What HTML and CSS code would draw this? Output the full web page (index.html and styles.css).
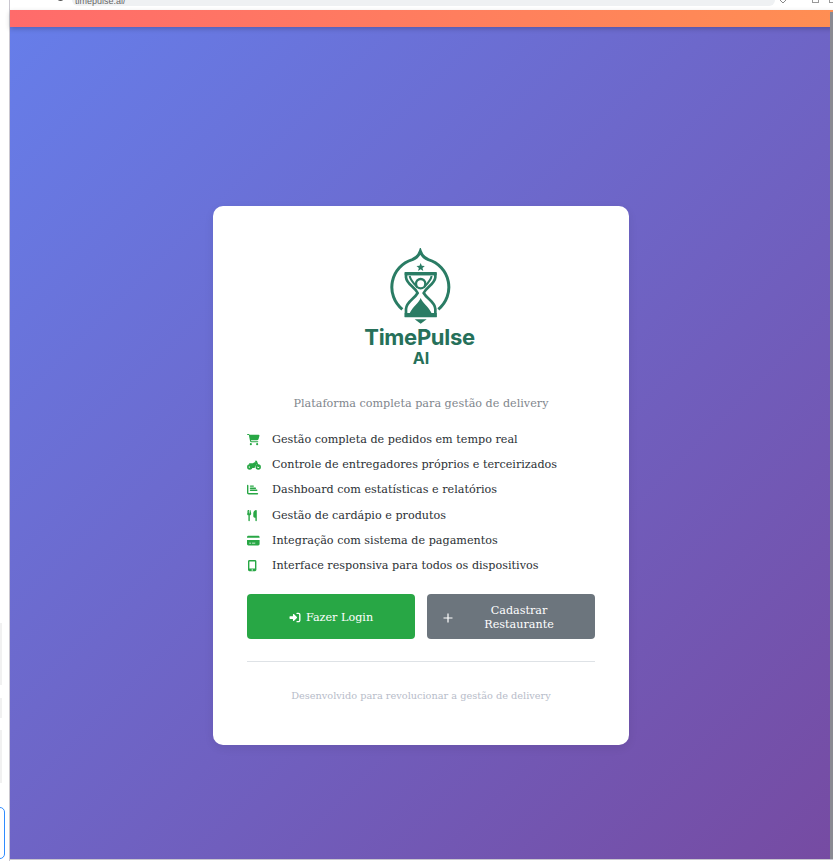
FILE: index.html
```html
<!DOCTYPE html>
<html lang="pt-BR">
<head>
<meta charset="utf-8">
<title>TimePulse AI</title>
<link rel="stylesheet" href="styles.css">
</head>
<body>
<div class="chrome">
  <div class="chrome-edge"></div>
  <div class="nav-icons">
    <svg class="nav-icon" viewBox="0 0 10 10"><path d="M8 2H2M4 0 2 2l2 2" /></svg>
    <svg class="nav-icon" viewBox="0 0 10 10"><path d="M2 2h6M6 0l2 2-2 2" /></svg>
    <svg class="nav-icon" viewBox="0 0 10 10"><path d="M1.500 0a4 4 0 1 0 7 0" /></svg>
  </div>
  <div class="address"><span class="address-text">timepulse.ai/</span></div>
  <div class="win-icons">
    <svg class="win-a" viewBox="0 0 8 6"><path d="M1 1l3 3 3-3"/></svg>
    <span class="win-b"></span>
    <span class="win-b"></span>
  </div>
</div>
<div class="window">
  <aside class="side">
    <div class="side-panel side-p1"></div>
    <div class="side-panel side-p2"></div>
    <div class="side-panel side-p3"></div>
    <div class="side-focus"></div>
  </aside>
  <div class="viewport">
    <div class="topbar"></div>
    <div class="scrollbar"></div>
    <main class="hero">
      <section class="card">
        <div class="logo">
          <svg class="logo-mark" viewBox="0 0 216 240" aria-hidden="true">
            <path class="ring" d="M52 184A86 86 0 0 1 82 35C94 30 102 22 106 10c4 12 12 20 24 25a86 86 0 0 1 30 149"/>
            <path class="fill" d="m107 45 3.500 8.500 9 .6-7 5.700 2.300 9-7.800-5-7.800 5 2.300-9-7-5.700 9-.6z"/>
            <path class="frame" d="M63 78h88v10c-2 20-25 28-35 47 10 18 34 25 35 48v20H63v-20c1-23 25-30 35-48-10-19-33-27-35-47z"/>
            <path class="inner" d="M74 84c3 14 14 24 24 35M140 84c-3 14-14 24-24 35"/>
            <path class="fill" d="M59 72h96v10H59zM59 195h96v13H59z"/>
            <circle class="disc" cx="107" cy="107" r="14"/>
            <path class="fill" d="M107 150c5 15 24 26 33 46H74c9-20 28-31 33-46z"/>
            <path class="fill" d="M89 214h36l-18 13z"/>
          </svg>
          <div class="logo-name">TimePulse</div>
          <div class="logo-sub">AI</div>
        </div>
        <p class="tagline">Plataforma completa para gestão de delivery</p>
        <ul class="features">
          <li class="feature">
            <svg class="f-icon" viewBox="0 0 576 512" preserveAspectRatio="xMinYMid meet"><path d="M0 24C0 11 11 0 24 0h45c22 0 42 13 51 32h411c26 0 46 25 39 50l-41 152c-8 28-33 47-62 47H180l5 29c2 11 12 20 24 20h287c13 0 24 11 24 24s-11 24-24 24H209c-35 0-64-25-71-59L87 55c-1-4-4-7-8-7H24C11 48 0 37 0 24zm128 440a48 48 0 1 1 96 0 48 48 0 1 1-96 0zm336-48a48 48 0 1 1 0 96 48 48 0 1 1 0-96z"/></svg>
            <span>Gestão completa de pedidos em tempo real</span>
          </li>
          <li class="feature">
            <svg class="f-icon" viewBox="0 0 640 512" preserveAspectRatio="xMinYMid meet">
              <circle class="bike-line" cx="125" cy="365" r="85"/>
              <circle class="bike-line" cx="515" cy="365" r="85"/>
              <path d="M95 190h175l70-45h50l-30-60h90l110 280h-70l-50-120-100 170H125z"/>
            </svg>
            <span>Controle de entregadores próprios e terceirizados</span>
          </li>
          <li class="feature">
            <svg class="f-icon" viewBox="0 0 512 512" preserveAspectRatio="xMinYMid meet"><path d="M64 64c0-18-14-32-32-32S0 46 0 64v336c0 44 36 80 80 80h400c18 0 32-14 32-32s-14-32-32-32H80c-9 0-16-7-16-16V64zm96 64h128c18 0 32-14 32-32s-14-32-32-32H160c-18 0-32 14-32 32s14 32 32 32zm0 96h224c18 0 32-14 32-32s-14-32-32-32H160c-18 0-32 14-32 32s14 32 32 32zm0 96h288c18 0 32-14 32-32s-14-32-32-32H160c-18 0-32 14-32 32s14 32 32 32z"/></svg>
            <span>Dashboard com estatísticas e relatórios</span>
          </li>
          <li class="feature">
            <svg class="f-icon" viewBox="0 0 448 512" preserveAspectRatio="xMinYMid meet"><path d="M416 0c-16 0-128 32-128 176v112c0 35 29 64 64 64h32v128c0 18 14 32 32 32s32-14 32-32V32c0-18-14-32-32-32zM64 16C64 8 58 1 50 0S35 4 33 12L2 152c-1 5-2 10-2 15 0 37 28 67 64 72v241c0 18 14 32 32 32s32-14 32-32V239c36-5 64-35 64-72 0-5-1-10-2-15L159 12c-2-8-9-13-17-12s-14 8-14 16v134c0 5-4 10-10 10-5 0-10-4-11-10L93 15c-1-8-8-15-17-15s-15 7-16 15L46 150c-1 6-6 10-11 10-6 0-10-5-10-10z"/></svg>
            <span>Gestão de cardápio e produtos</span>
          </li>
          <li class="feature">
            <svg class="f-icon" viewBox="0 0 576 512" preserveAspectRatio="xMinYMid meet"><path d="M64 32C29 32 0 61 0 96v32h576V96c0-35-29-64-64-64H64zm512 192H0v192c0 35 29 64 64 64h448c35 0 64-29 64-64V224zM112 352h64c9 0 16 7 16 16s-7 16-16 16h-64c-9 0-16-7-16-16s7-16 16-16zm112 16c0-9 7-16 16-16h128c9 0 16 7 16 16s-7 16-16 16H240c-9 0-16-7-16-16z"/></svg>
            <span>Integração com sistema de pagamentos</span>
          </li>
          <li class="feature">
            <svg class="f-icon f-icon-mobile" viewBox="0 0 384 512" preserveAspectRatio="xMinYMid meet"><path d="M64 0C29 0 0 29 0 64v384c0 35 29 64 64 64h256c35 0 64-29 64-64V64c0-35-29-64-64-64H64zm0 64h256v320H64V64zm128 360a32 32 0 1 1 0 64 32 32 0 1 1 0-64z"/></svg>
            <span>Interface responsiva para todos os dispositivos</span>
          </li>
        </ul>
        <div class="actions">
          <a class="btn btn-login">
            <svg class="btn-icon" viewBox="0 0 512 512"><path d="M352 96h64c18 0 32 14 32 32v256c0 18-14 32-32 32h-64c-18 0-32 14-32 32s14 32 32 32h64c53 0 96-43 96-96V128c0-53-43-96-96-96h-64c-18 0-32 14-32 32s14 32 32 32zm-9 183c13-12 13-33 0-46L215 105c-9-9-23-12-35-7s-20 17-20 30v64H32c-18 0-32 14-32 32v64c0 18 14 32 32 32h128v64c0 13 8 25 20 30s26 2 35-7l128-128z"/></svg>
            <span>Fazer Login</span>
          </a>
          <a class="btn btn-register">
            <svg class="btn-icon plus" viewBox="0 0 10 10"><path d="M5 .5v9M.5 5h9"/></svg>
            <span class="btn-label">Cadastrar Restaurante</span>
          </a>
        </div>
        <hr class="rule">
        <p class="foot">Desenvolvido para revolucionar a gestão de delivery</p>
      </section>
    </main>
  </div>
</div>
</body>
</html>
```
FILE: styles.css
```css
* { box-sizing: border-box; }
html, body { margin: 0; height: 100%; overflow: hidden; }
body {
  display: flex;
  flex-direction: column;
  background: #fff;
  font-family: "DejaVu Serif", serif;
}
.chrome {
  height: 10px;
  display: flex;
  align-items: flex-start;
  background: #fff;
  flex: none;
  overflow: hidden;
}
.chrome-edge { width: 10px; height: 10px; flex: none; border-right: 1px solid #c9c6cf; }
.nav-icons { width: 62px; display: flex; gap: 11px; padding: 0 0 0 6px; margin-top: -5px; flex: none; }
.nav-icon { width: 9px; height: 9px; fill: none; stroke: #555; stroke-width: 1.300; }
.address {
  width: 703px;
  height: 6px;
  background: #eff1f3;
  border-radius: 0 0 6px 6px;
  font-family: "Liberation Sans", sans-serif;
  font-size: 9px;
  line-height: 6px;
  color: #666;
  padding-left: 3px;
  flex: none;
  overflow: hidden;
}
.address-text { position: relative; top: -2px; }
.win-icons { display: flex; gap: 10px; margin: -3px 0 0 4px; }
.win-a { width: 8px; height: 6px; margin: 2px 15px 0 0; fill: none; stroke: #888; stroke-width: 1; }
.win-b { width: 7px; height: 6px; border: 1px solid #999; }
.window { flex: 1; display: flex; min-height: 0; }
.side {
  width: 10px;
  flex: none;
  background: #fff;
  border-right: 1px solid #c9c6cf;
  padding-top: 613px;
  display: flex;
  flex-direction: column;
}
.side-panel { width: 2px; background: #f1f1f1; }
.side-p1 { height: 62px; }
.side-p2 { height: 20px; margin-top: 13px; }
.side-p3 { height: 53px; margin-top: 12px; }
.side-focus {
  width: 6px;
  height: 52px;
  margin-top: 24px;
  margin-left: -1px;
  border: 1px solid #2f8cff;
  border-radius: 0 5px 5px 0;
}
.viewport {
  flex: 1;
  min-width: 0;
  margin-bottom: 1px;
  display: flex;
  flex-direction: column;
  position: relative;
  background: linear-gradient(135deg, #667eea 0%, #764ba2 100%);
  border-bottom: 1px solid #c9c6cf;
}
.topbar {
  height: 17px;
  flex: none;
  background: linear-gradient(90deg, #ff6b6b, #ff8e53);
  box-shadow: 0 2px 5px rgba(0, 0, 0, .2);
}
.scrollbar {
  position: absolute;
  top: 2px;
  right: 0;
  bottom: 0;
  width: 3px;
  background: #8a8a92;
}
.hero {
  flex: 1;
  display: flex;
  justify-content: center;
  align-items: flex-start;
  padding: 179px 3px 0 2px;
}
.card {
  width: 416px;
  height: 539px;
  padding: 34px 34px 0;
  background: #fff;
  border-radius: 10px;
  box-shadow: 0 3px 10px rgba(0, 0, 0, .08);
}
.logo {
  height: 128px;
  display: flex;
  flex-direction: column;
  align-items: center;
  color: #26705a;
  font-family: Inter, "Liberation Sans", sans-serif;
  font-weight: 700;
  line-height: 1;
}
.logo-mark { width: 72px; height: 80px; flex: none; margin-top: 8px; display: block; }
.ring, .frame, .inner { fill: none; stroke: #2a7c64; stroke-width: 9; }
.frame { stroke-width: 8; }
.inner { stroke-width: 6; }
.disc { fill: #fff; stroke: #2a7c64; stroke-width: 7; }
.fill { fill: #2a7c64; }
.logo-name { font-size: 22px; letter-spacing: -.3px; margin: -2px 3px 0 0; }
.logo-sub { font-size: 16px; margin-top: 2px; }
.tagline {
  margin: 27px 0 0;
  text-align: center;
  font-size: 11.200px;
  line-height: 18px;
  color: #7f868d;
}
.features { list-style: none; margin: 14px 0 0; padding: 0; }
.feature {
  height: 25.200px;
  display: flex;
  align-items: center;
  font-size: 11.200px;
  color: #2b3035;
}
.f-icon { width: 14px; height: 11.200px; margin-right: 11px; fill: #28a745; flex: none; overflow: visible; }
.f-icon-mobile { padding-left: 1px; }
.bike-line { fill: none; stroke: #28a745; stroke-width: 75; }
.actions { display: grid; grid-template-columns: 1fr 1fr; gap: 12px; margin-top: 16px; }
.btn {
  min-width: 0;
  height: 45px;
  padding-top: 2px;
  display: flex;
  align-items: center;
  justify-content: center;
  border-radius: 4px;
  color: #fff;
  font-size: 11.200px;
  line-height: 14px;
}
.btn-login { background: #28a745; gap: 5px; }
.btn-register { background: #6c757d; padding: 2px 16px 0; gap: 6px; }
.btn-label { flex: 1; text-align: center; }
.btn-icon { width: 12px; height: 11px; fill: #fff; flex: none; }
.plus { width: 10px; height: 10px; fill: none; stroke: #fff; stroke-width: 1.200; }
.rule { height: 1px; margin: 22px 0 0; border: 0; background: #dee2e6; }
.foot {
  margin: 28px 0 0;
  text-align: center;
  font-size: 9.750px;
  line-height: 12px;
  color: #b7bcc9;
}
```
